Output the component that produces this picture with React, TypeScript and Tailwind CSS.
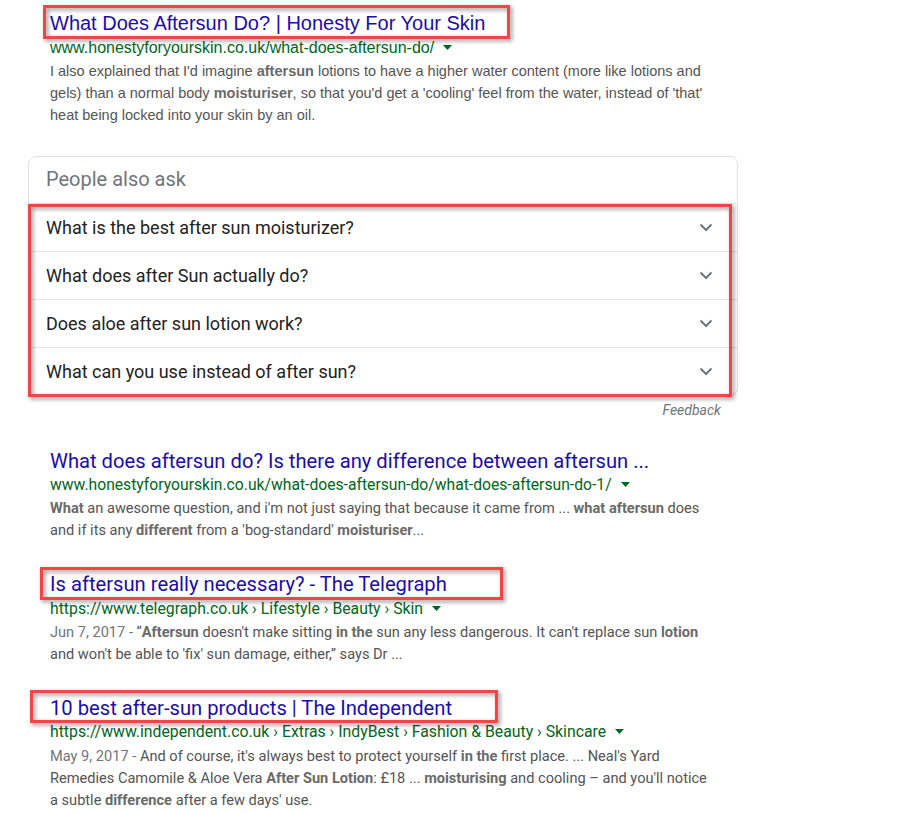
import React from "react";

const RED = "border-[3px] border-[#f24646] drop-shadow-[2px_2px_2px_rgba(0,0,0,0.45)]";

function Caret() {
  return (
    <svg width="9" height="6" viewBox="0 0 9 6" className="inline-block ml-[9px] mb-[2px]" aria-hidden="true">
      <path d="M0 0 L9 0 L4.5 5 Z" fill="#006621" />
    </svg>
  );
}

function Chevron() {
  return (
    <svg width="14" height="9" viewBox="0 0 14 9" aria-hidden="true">
      <path d="M1.5 1.5 L7 7 L12.5 1.5" stroke="#70757a" strokeWidth="2" fill="none" />
    </svg>
  );
}

const QUESTIONS = [
  "What is the best after sun moisturizer?",
  "What does after Sun actually do?",
  "Does aloe after sun lotion work?",
  "What can you use instead of after sun?",
];

function B({ children }: { children: React.ReactNode }) {
  return <b className="font-bold text-[#6a6a6a]">{children}</b>;
}

export default function App() {
  return (
    <div className="w-[909px] h-[813px] bg-white overflow-hidden font-['Roboto',sans-serif]">
      {/* Result 1 */}
      <div className="pl-[50px] pt-[10px] font-['Liberation_Sans',Arial,sans-serif]">
        <div className="relative inline-block">
          <a className="text-[20px] leading-[26px] text-[#1a0dab] whitespace-nowrap">
            What Does Aftersun Do? | Honesty For Your Skin
          </a>
          <span className={`absolute -left-[7px] -top-[5px] w-[467px] h-[34px] ${RED}`} />
        </div>
        <div className="mt-px text-[16px] leading-[20px] text-[#006621] whitespace-nowrap">
          www.honestyforyourskin.co.uk/what-does-aftersun-do/
          <Caret />
        </div>
        <div className="mt-[2px] text-[14.5px] leading-[22px] text-[#545454] whitespace-nowrap">
          <div>
            I also explained that I'd imagine <B>aftersun</B> lotions to have a higher water content (more like lotions and
          </div>
          <div>
            gels) than a normal body <B>moisturiser</B>, so that you'd get a 'cooling' feel from the water, instead of 'that'
          </div>
          <div>heat being locked into your skin by an oil.</div>
        </div>
      </div>

      {/* People also ask */}
      <div className="relative ml-[28px] mt-[30px] w-[710px] border border-[#dfe1e5] rounded-[8px]">
        <div className="h-[46px] pl-[17px] pb-[2px] flex items-center text-[20px] text-[#70757a]">People also ask</div>
        {QUESTIONS.map((q) => (
          <div key={q} className="h-[48px] border-t border-[#e6e6e6] pl-[17px] pr-[24px] flex items-center justify-between">
            <span className="text-[18px] text-[#222222]">{q}</span>
            <Chevron />
          </div>
        ))}
        <span className={`absolute -left-px top-[47px] w-[704px] h-[193px] ${RED}`} />
      </div>
      <div className="w-[721px] mt-[6px] text-right text-[14px] leading-[16px] italic text-[#70757a]">Feedback</div>

      {/* Result 2 */}
      <div className="pl-[50px] mt-[30px]">
        <a className="block text-[20.2px] leading-[26px] text-[#1a0dab] whitespace-nowrap">
          What does aftersun do? Is there any difference between aftersun ...
        </a>
        <div className="mt-px text-[15.7px] leading-[20px] text-[#006621] whitespace-nowrap">
          www.honestyforyourskin.co.uk/what-does-aftersun-do/what-does-aftersun-do-1/
          <Caret />
        </div>
        <div className="mt-[2px] text-[14.6px] leading-[22px] text-[#545454] whitespace-nowrap">
          <div>
            <B>What</B> an awesome question, and i'm not just saying that because it came from ... <B>what aftersun</B> does
          </div>
          <div>
            and if its any <B>different</B> from a 'bog-standard' <B>moisturiser</B>...
          </div>
        </div>
      </div>

      {/* Result 3 */}
      <div className="pl-[50px] mt-[30px]">
        <div className="relative inline-block">
          <a className="text-[20.2px] leading-[26px] text-[#1a0dab] whitespace-nowrap">
            Is aftersun really necessary? - The Telegraph
          </a>
          <span className={`absolute -left-[10px] -top-[4px] w-[463px] h-[33px] ${RED}`} />
        </div>
        <div className="mt-px text-[15.8px] leading-[20px] text-[#006621] whitespace-nowrap">
          https://www.telegraph.co.uk › Lifestyle › Beauty › Skin
          <Caret />
        </div>
        <div className="mt-[2px] text-[14.6px] leading-[22px] text-[#545454] whitespace-nowrap">
          <div>
            <span className="text-[#70757a]">Jun 7, 2017 - </span>“<B>Aftersun</B> doesn't make sitting <B>in the</B> sun any less dangerous. It can't replace sun <B>lotion</B>
          </div>
          <div>and won't be able to 'fix' sun damage, either,” says Dr ...</div>
        </div>
      </div>

      {/* Result 4 */}
      <div className="pl-[50px] mt-[30px]">
        <div className="relative inline-block">
          <a className="text-[20.2px] leading-[26px] text-[#1a0dab] whitespace-nowrap">
            10 best after-sun products | The Independent
          </a>
          <span className={`absolute -left-[20px] -top-[5px] w-[468px] h-[33px] ${RED}`} />
        </div>
        <div className="text-[15.8px] leading-[20px] text-[#006621] whitespace-nowrap">
          https://www.independent.co.uk › Extras › IndyBest › Fashion &amp; Beauty › Skincare
          <Caret />
        </div>
        <div className="mt-[3px] text-[14.6px] leading-[22px] text-[#545454] whitespace-nowrap">
          <div>
            <span className="text-[#70757a]">May 9, 2017 - </span>And of course, it's always best to protect yourself <B>in the</B> first place. ... Neal's Yard
          </div>
          <div>
            Remedies Camomile &amp; Aloe Vera <B>After Sun Lotion</B>: £18 ... <B>moisturising</B> and cooling – and you'll notice
          </div>
          <div>
            a subtle <B>difference</B> after a few days' use.
          </div>
        </div>
      </div>
    </div>
  );
}
